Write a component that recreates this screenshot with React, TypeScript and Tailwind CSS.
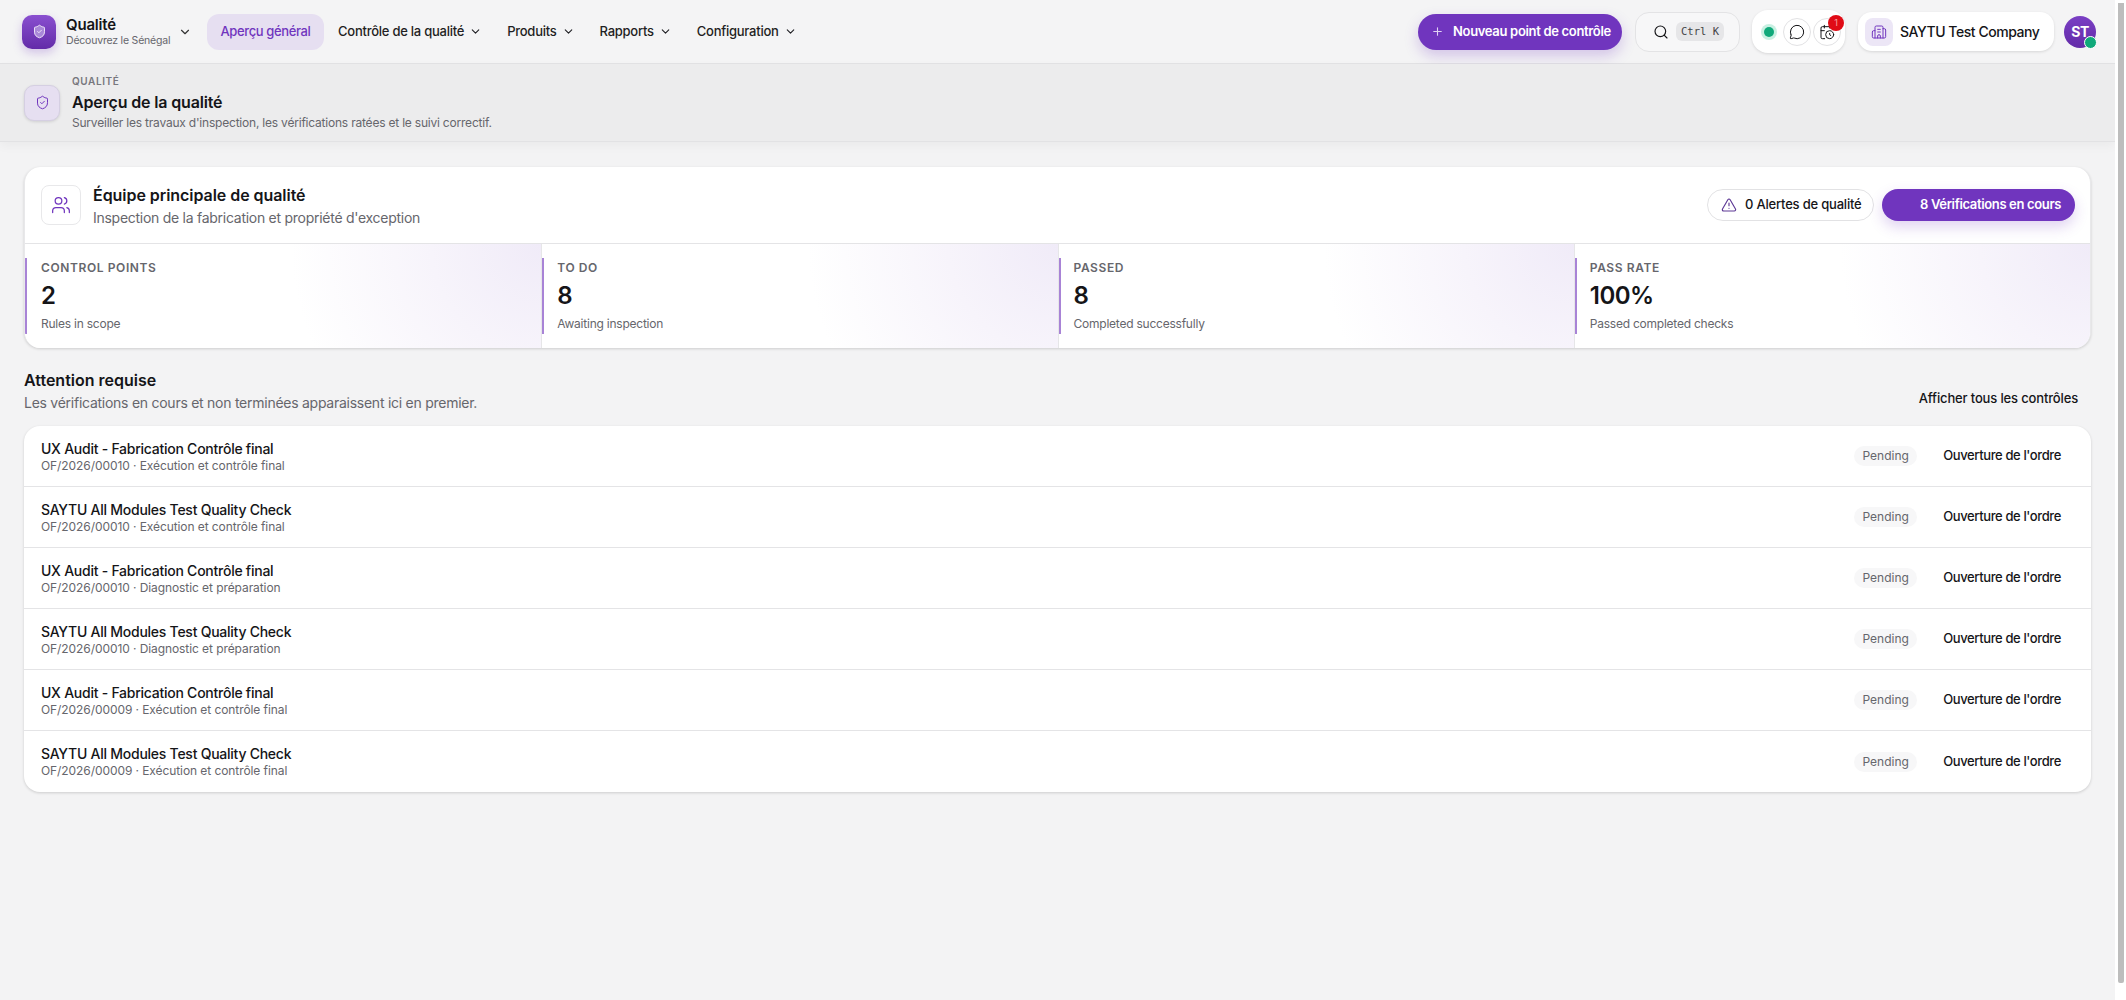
import { ChevronDown, Plus, Search, MessageCircle, CalendarClock, Building2, Users, TriangleAlert, ShieldCheck } from "lucide-react";

const stats = [
  { label: "CONTROL POINTS", value: "2", sub: "Rules in scope" },
  { label: "TO DO", value: "8", sub: "Awaiting inspection" },
  { label: "PASSED", value: "8", sub: "Completed successfully" },
  { label: "PASS RATE", value: "100%", sub: "Passed completed checks" },
];

const rows = [
  ["UX Audit - Fabrication Contrôle final", "OF/2026/00010 · Exécution et contrôle final"],
  ["SAYTU All Modules Test Quality Check", "OF/2026/00010 · Exécution et contrôle final"],
  ["UX Audit - Fabrication Contrôle final", "OF/2026/00010 · Diagnostic et préparation"],
  ["SAYTU All Modules Test Quality Check", "OF/2026/00010 · Diagnostic et préparation"],
  ["UX Audit - Fabrication Contrôle final", "OF/2026/00009 · Exécution et contrôle final"],
  ["SAYTU All Modules Test Quality Check", "OF/2026/00009 · Exécution et contrôle final"],
];

function NavItem({ label }: { label: string }) {
  return (
    <div className="flex items-center gap-[5px] text-[13px] font-medium tracking-[-0.25px] text-[#1f1f23]">
      {label}
      <ChevronDown size={13} strokeWidth={2} />
    </div>
  );
}

export default function App() {
  return (
    <div className="flex h-[1000px] overflow-hidden bg-[#f3f3f4] font-['Inter',sans-serif] text-[#151518]">
      <div className="flex min-w-0 flex-1 flex-col">
        <header className="flex h-[64px] shrink-0 items-center justify-between border-b border-[#e2e2e4] bg-[#f4f4f5] pl-[22px] pr-[19px]">
          <div className="flex items-center">
            <div className="flex h-[34px] w-[34px] items-center justify-center rounded-[10px] bg-gradient-to-b from-[#8a4fd0] to-[#632ba8] shadow-[0_4px_10px_rgba(112,53,190,0.25)]">
              <ShieldCheck size={15} strokeWidth={1.5} className="text-[#f1e9fa]" fill="#a988d8" />
            </div>
            <div className="ml-[10px] w-[112px] whitespace-nowrap">
              <div className="text-[15px] leading-[18px] font-semibold tracking-[-0.2px]">Qualité</div>
              <div className="text-[10.5px] leading-[13px] tracking-[-0.2px] text-[#66666c]">Découvrez le Sénégal</div>
            </div>
            <ChevronDown size={14} strokeWidth={2} className="text-[#333]" />
            <div className="ml-[15px] flex h-[36px] w-[117px] items-center justify-center rounded-[12px] bg-[#e6dff1] text-[13px] font-medium tracking-[-0.38px] text-[#7035be]">
              Aperçu général
            </div>
            <div className="ml-[14px] flex items-center gap-[25px]">
              <NavItem label="Contrôle de la qualité" />
              <NavItem label="Produits" />
              <NavItem label="Rapports" />
              <NavItem label="Configuration" />
            </div>
          </div>
          <div className="flex items-center">
            <div className="flex h-[36px] w-[204px] items-center gap-[9px] rounded-full bg-[#7035be] pl-[13px] text-[13px] font-semibold tracking-[-0.32px] whitespace-nowrap text-white shadow-[0_6px_14px_rgba(112,53,190,0.25)]">
              <Plus size={13} className="text-[#e0d2f3]" />
              Nouveau point de contrôle
            </div>
            <div className="ml-[13px] flex h-[40px] w-[105px] items-center gap-[7px] rounded-[14px] border border-[#e3e3e5] bg-[#f7f7f8] pl-[17px]">
              <Search size={16} strokeWidth={1.75} />
              <span className="flex h-[19px] w-[48px] items-center justify-center rounded-[6px] bg-[#e6e6e8] font-['DejaVu_Sans_Mono',monospace] text-[10.5px] text-[#444]">Ctrl K</span>
            </div>
            <div className="relative ml-[12px] flex h-[43px] w-[93px] items-center rounded-[16px] bg-white pl-[12px] shadow-[0_1px_3px_rgba(0,0,0,0.12)]">
              <span className="h-[10px] w-[10px] rounded-full bg-[#10a97a] shadow-[0_0_0_3px_#c8f0e2]" />
              <span className="ml-[9px] flex h-[28px] w-[28px] items-center justify-center rounded-full border border-[#e2e2e4]">
                <MessageCircle size={16} strokeWidth={1.5} />
              </span>
              <span className="ml-[2px] flex h-[28px] w-[28px] items-center justify-center rounded-full border border-[#e2e2e4]">
                <CalendarClock size={16} strokeWidth={1.5} />
              </span>
              <span className="absolute top-[5px] left-[76px] flex h-[16px] w-[16px] items-center justify-center rounded-full bg-[#e00b16] text-[9px] text-[#f5a0a0]">1</span>
            </div>
            <div className="ml-[13px] flex h-[39px] w-[196px] items-center rounded-[14px] bg-white pl-[7px] shadow-[0_1px_3px_rgba(0,0,0,0.12)]">
              <span className="flex h-[28px] w-[28px] items-center justify-center rounded-[8px] bg-[#ece6f6]">
                <Building2 size={16} strokeWidth={1.5} className="text-[#7035be]" />
              </span>
              <span className="ml-[7px] text-[14px] font-medium tracking-[-0.45px] whitespace-nowrap">SAYTU Test Company</span>
            </div>
            <div className="relative ml-[10px] flex h-[32px] w-[32px] items-center justify-center rounded-full bg-gradient-to-b from-[#7a3fc4] to-[#632ba8] text-[14px] font-bold tracking-[-0.4px] text-white">
              ST
              <span className="absolute -right-[1px] -bottom-[1px] h-[13px] w-[13px] rounded-full border border-white bg-[#10a97a]" />
            </div>
          </div>
        </header>

        <section className="flex h-[78px] shrink-0 items-center border-b border-[#e2e2e4] bg-[#ececed] pl-[24px] shadow-[0_4px_10px_rgba(0,0,0,0.04)]">
          <div className="flex h-[36px] w-[36px] items-center justify-center rounded-[10px] border border-[#d5cfe2] bg-[#e6dff1] shadow-[0_1px_3px_rgba(0,0,0,0.12)]">
            <ShieldCheck size={15} strokeWidth={1.6} className="text-[#7035be]" />
          </div>
          <div className="ml-[12px]">
            <div className="text-[10px] leading-[14px] font-semibold tracking-[0.06em] text-[#77777d]">QUALITÉ</div>
            <div className="mt-[3px] text-[16px] leading-[22px] font-semibold tracking-[-0.15px]">Aperçu de la qualité</div>
            <div className="mt-[2px] text-[12px] leading-[16px] tracking-[-0.21px] text-[#66666c]">Surveiller les travaux d'inspection, les vérifications ratées et le suivi correctif.</div>
          </div>
        </section>

        <main className="px-[24px] pt-[25px]">
          <div className="overflow-hidden rounded-[16px] border-x border-[#e8e8ea] bg-white shadow-[0_1px_3px_rgba(0,0,0,0.16)]">
            <div className="flex h-[77px] items-center justify-between border-b border-[#e4e4e6] pr-[15px] pl-[16px]">
              <div className="flex items-center">
                <div className="flex h-[40px] w-[40px] items-center justify-center rounded-[8px] border border-[#e8e8ea]">
                  <Users size={20} strokeWidth={1.5} className="text-[#7035be]" />
                </div>
                <div className="ml-[12px]">
                  <div className="text-[16px] leading-[24px] font-semibold tracking-[-0.05px]">Équipe principale de qualité</div>
                  <div className="mt-[1px] text-[14px] leading-[20px] tracking-[-0.27px] text-[#66666c]">Inspection de la fabrication et propriété d'exception</div>
                </div>
              </div>
              <div className="flex items-center gap-[8px]">
                <div className="flex h-[32px] w-[167px] items-center gap-[8px] rounded-full border border-[#e2e2e4] bg-white pl-[13px] text-[13px] font-medium tracking-[-0.2px] whitespace-nowrap">
                  <TriangleAlert size={16} strokeWidth={1.75} className="text-[#5f3a96]" />
                  0 Alertes de qualité
                </div>
                <div className="flex h-[32px] w-[193px] items-center justify-end rounded-full bg-[#7035be] pr-[14px] text-[13px] font-semibold tracking-[-0.35px] whitespace-nowrap text-white shadow-[0_6px_14px_rgba(112,53,190,0.22)]">
                  8 Vérifications en cours
                </div>
              </div>
            </div>
            <div className="grid grid-cols-4">
              {stats.map((s, i) => (
                <div key={s.label} className={`flex h-[104px] items-center bg-[radial-gradient(circle_at_100%_0%,#f0ebf8_0px,#f7f4fb_110px,#ffffff_250px)] ${i > 0 ? "border-l border-[#e6e6e8]" : ""}`}>
                  <div className="h-[76px] w-[2px] shrink-0 bg-[#a883d6]" />
                  <div className={i > 0 ? "pl-[13px]" : "pl-[14px]"}>
                    <div className="pt-[1px] text-[12px] leading-[16px] font-semibold tracking-[0.05em] text-[#66666c]">{s.label}</div>
                    <div className="mt-[2px] text-[24px] leading-[36px] font-semibold tracking-[-0.5px]">{s.value}</div>
                    <div className="mt-[1px] text-[12px] leading-[18px] tracking-[-0.23px] text-[#66666c]">{s.sub}</div>
                  </div>
                </div>
              ))}
            </div>
          </div>

          <div className="mt-[20px] flex h-[58px] items-start justify-between">
            <div>
              <div className="text-[16px] leading-[24px] font-semibold">Attention requise</div>
              <div className="mt-[1px] text-[14px] leading-[20px] tracking-[-0.26px] text-[#66666c]">Les vérifications en cours et non terminées apparaissent ici en premier.</div>
            </div>
            <div className="mt-[20px] pr-[13px] text-[13px] leading-[20px] font-medium tracking-[-0.15px]">Afficher tous les contrôles</div>
          </div>

          <div className="overflow-hidden rounded-[16px] bg-white shadow-[0_1px_3px_rgba(0,0,0,0.16)]">
            {rows.map((r, i) => (
              <div key={i} className={`flex h-[61px] items-center justify-between pr-[30px] pl-[17px] ${i < 5 ? "border-b border-[#e4e4e6]" : ""}`}>
                <div className="pt-[1px]">
                  <div className="text-[14px] leading-[18px] font-medium tracking-[-0.25px]">{r[0]}</div>
                  <div className="text-[12px] leading-[16px] tracking-[-0.08px] text-[#66666c]">{r[1]}</div>
                </div>
                <div className="flex items-center">
                  <span className="flex h-[20px] w-[63px] items-center justify-center rounded-full bg-[#f7f7f8] text-[12px] text-[#66666c]">Pending</span>
                  <span className="ml-[26px] text-[13px] font-medium tracking-[-0.38px] whitespace-nowrap">Ouverture de l'ordre</span>
                </div>
              </div>
            ))}
          </div>
        </main>
      </div>
      <div className="w-[11px] shrink-0 bg-white pt-[3px] pr-[2px] pl-[3px]">
        <div className="h-[980px] rounded-b-[2px] bg-[#bdbdbd]" />
      </div>
    </div>
  );
}
